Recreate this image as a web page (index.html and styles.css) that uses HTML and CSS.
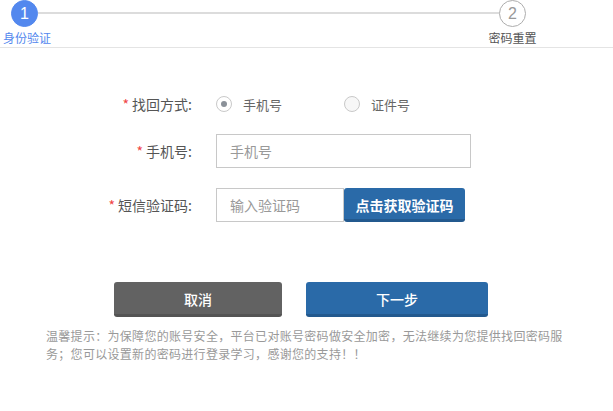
FILE: index.html
```html
<!DOCTYPE html>
<html lang="zh-CN">
<head>
<meta charset="utf-8">
<title>找回密码</title>
<link rel="stylesheet" href="styles.css">
</head>
<body>
<div class="header">
  <div class="steps">
    <div class="step step-first">
      <span class="circle active">1</span>
      <span class="step-text active-text">身份验证</span>
    </div>
    <div class="connector"></div>
    <div class="step step-last">
      <span class="circle">2</span>
      <span class="step-text">密码重置</span>
    </div>
  </div>
</div>

<div class="form">
  <div class="row row-method">
    <label class="label"><span class="req">*</span> 找回方式:</label>
    <div class="radios">
      <span class="option option-first"><span class="radio checked"></span><span class="opt-text">手机号</span></span>
      <span class="option"><span class="radio"></span><span class="opt-text">证件号</span></span>
    </div>
  </div>
  <div class="row row-phone">
    <label class="label"><span class="req">*</span> 手机号:</label>
    <input class="input input-long" type="text" placeholder="手机号">
  </div>
  <div class="row row-code">
    <label class="label"><span class="req">*</span> 短信验证码:</label>
    <input class="input input-short" type="text" placeholder="输入验证码">
    <button class="btn btn-code" type="button">点击获取验证码</button>
  </div>
</div>

<div class="actions">
  <button class="btn btn-cancel" type="button">取消</button>
  <button class="btn btn-next" type="button">下一步</button>
</div>

<p class="tip">温馨提示：为保障您的账号安全，平台已对账号密码做安全加密，无法继续为您提供找回密码服务；您可以设置新的密码进行登录学习，感谢您的支持！！</p>
</body>
</html>
```

FILE: styles.css
```css
* {
  box-sizing: border-box;
}

html, body {
  margin: 0;
  padding: 0;
  background: #fff;
}

body {
  font-family: "Noto Sans CJK SC", "Noto Sans", "Liberation Sans", sans-serif;
  color: #555;
  width: 613px;
  height: 411px;
  overflow: hidden;
}

.header {
  border-bottom: 1px solid #e4e4e4;
  padding-bottom: 1px;
  height: 48px;
}

.steps {
  display: flex;
  align-items: flex-start;
  padding-left: 3px;
  width: 537px;
}

.step {
  position: relative;
  z-index: 1;
  display: flex;
  flex-direction: column;
  width: 49px;
}

.step-first {
  align-items: flex-start;
}

.step-last {
  align-items: center;
}

.circle {
  display: flex;
  align-items: center;
  justify-content: center;
  width: 27px;
  height: 27px;
  border-radius: 50%;
  border: 1px solid #adadad;
  background: #fff;
  color: #999;
  font-family: "Liberation Sans", "Noto Sans", sans-serif;
  font-size: 16px;
  line-height: 1;
}

.circle.active {
  background: #5388ee;
  border-color: #5388ee;
  color: #fff;
  margin-left: 8px;
}

.step-text {
  margin-top: 3px;
  font-size: 12px;
  line-height: 16px;
  white-space: nowrap;
  color: #555;
}

.step-text.active-text {
  color: #5388ee;
}

.connector {
  flex: 1;
  height: 2px;
  background: #dcdcdc;
  margin-top: 12px;
  margin-left: -14px;
  margin-right: -11px;
}

.form {
  margin-top: 39px;
}

.row {
  display: flex;
  align-items: center;
  height: 34px;
}

.row-method {
  margin-bottom: 13px;
}

.row-phone {
  margin-bottom: 20px;
}

.label {
  width: 192px;
  margin-right: 24px;
  text-align: right;
  font-size: 14px;
  color: #555;
  white-space: nowrap;
}

.req {
  color: #f04545;
}

.radios {
  display: flex;
  align-items: center;
}

.option {
  display: flex;
  align-items: center;
}

.option-first {
  width: 128px;
}

.radio {
  width: 16px;
  height: 16px;
  border: 1px solid #c9c9c9;
  border-radius: 50%;
  background: #f7f7f7;
  display: flex;
  align-items: center;
  justify-content: center;
  margin-right: 11px;
}

.radio.checked {
  background: #fff;
}

.radio.checked::after {
  content: "";
  width: 6px;
  height: 6px;
  border-radius: 50%;
  background: #8b9199;
}

.opt-text {
  font-size: 13px;
  color: #666;
}

.input {
  height: 34px;
  border: 1px solid #c8c8c8;
  padding: 0 13px;
  font-family: inherit;
  font-size: 14px;
  color: #555;
  outline: none;
  background: #fff;
}

.input::placeholder {
  color: #999;
}

.input-long {
  width: 255px;
}

.input-short {
  width: 128px;
}

.btn {
  font-family: inherit;
  border: 0;
  color: #fff;
  cursor: pointer;
  border-radius: 3px;
  padding: 0;
}

.btn-code {
  width: 121px;
  height: 34px;
  background: #2a6aa8;
  border-bottom: 3px solid #23598e;
  font-size: 14px;
  font-weight: bold;
  padding-top: 2px;
}

.actions {
  display: flex;
  gap: 24px;
  padding-left: 114px;
  margin-top: 60px;
}

.btn-cancel,
.btn-next {
  height: 35px;
  font-size: 14px;
  font-weight: 500;
  padding-top: 2px;
}

.btn-cancel {
  width: 168px;
  background: #626262;
  border-bottom: 3px solid #545454;
}

.btn-next {
  width: 182px;
  background: #2a6aa8;
  border-bottom: 3px solid #23598e;
}

.tip {
  margin: 10px 0 0 46px;
  width: 522px;
  font-size: 12px;
  line-height: 18px;
  letter-spacing: 0.3px;
  color: #999;
}
```
